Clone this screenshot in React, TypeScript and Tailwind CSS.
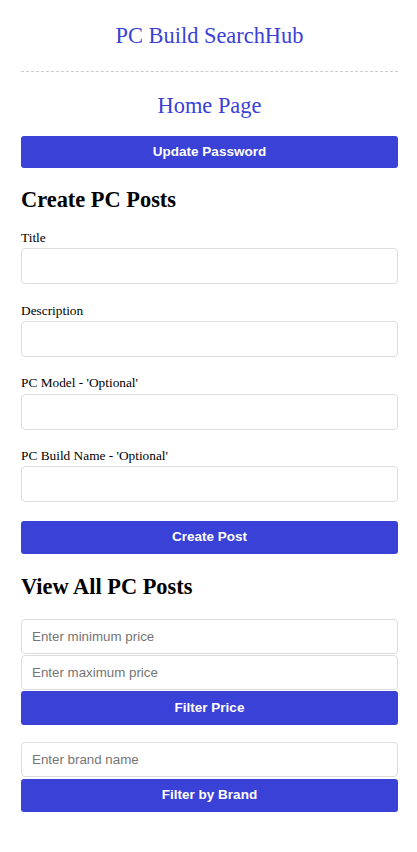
import React from "react";

const serif = { fontFamily: '"Liberation Serif", "Times New Roman", serif' };
const sans = { fontFamily: '"Liberation Sans", Arial, sans-serif' };

function Label({ children, className = "" }: { children: React.ReactNode; className?: string }) {
  return (
    <label className={`block text-[13.33px] leading-[15px] text-black ${className}`} style={serif}>
      {children}
    </label>
  );
}

function Field({ className = "", placeholder = "", h = "h-[36px]" }: { className?: string; placeholder?: string; h?: string }) {
  return (
    <input
      type="text"
      placeholder={placeholder}
      className={`block w-full ${h} rounded-[4px] border border-[#dddddd] bg-white px-[10px] text-[13.33px] text-black placeholder:text-[#757575] outline-none ${className}`}
      style={sans}
    />
  );
}

function Button({ children, className = "", h = "h-[33px]" }: { children: React.ReactNode; className?: string; h?: string }) {
  return (
    <button
      className={`block w-full ${h} rounded-[3px] bg-[#3a41d7] text-[13.5px] font-bold text-white ${className}`}
      style={sans}
    >
      {children}
    </button>
  );
}

export default function App() {
  return (
    <div className="min-h-screen bg-white">
      <div className="pl-[21px] pr-[19px] pb-10">
        {/* Header */}
        <h1 className="pt-[23px] pb-[22px] text-center text-[22.4px] leading-[26px] text-[#3a41d7] border-b border-dashed border-[#cccccc]" style={serif}>
          PC Build SearchHub
        </h1>
        <h2 className="mt-[21px] text-center text-[22.4px] leading-[26px] text-[#3a41d7]" style={serif}>
          Home Page
        </h2>
        <Button className="mt-[17px]" h="h-[32px]">Update Password</Button>

        {/* Create posts */}
        <h3 className="mt-[19px] text-[22.4px] font-bold leading-[26px] text-black" style={serif}>
          Create PC Posts
        </h3>
        <Label className="mt-[17px]">Title</Label>
        <Field className="mt-[3px]" />
        <Label className="mt-[19px]">Description</Label>
        <Field className="mt-[3px]" />
        <Label className="mt-[18px]">PC Model - 'Optional'</Label>
        <Field className="mt-[4px]" />
        <Label className="mt-[18px]">PC Build Name - 'Optional'</Label>
        <Field className="mt-[3px]" />
        <Button className="mt-[19px]">Create Post</Button>

        {/* View posts */}
        <h3 className="mt-[20px] text-[22.4px] font-bold leading-[26px] text-black" style={serif}>
          View All PC Posts
        </h3>
        <Field className="mt-[19px]" h="h-[35px]" placeholder="Enter minimum price" />
        <Field className="mt-[1px]" h="h-[35px]" placeholder="Enter maximum price" />
        <Button className="mt-[1px]" h="h-[34px]">Filter Price</Button>

        <Field className="mt-[17px]" h="h-[35px]" placeholder="Enter brand name" />
        <Button className="mt-[2px]" h="h-[33px]">Filter by Brand</Button>
      </div>
    </div>
  );
}
